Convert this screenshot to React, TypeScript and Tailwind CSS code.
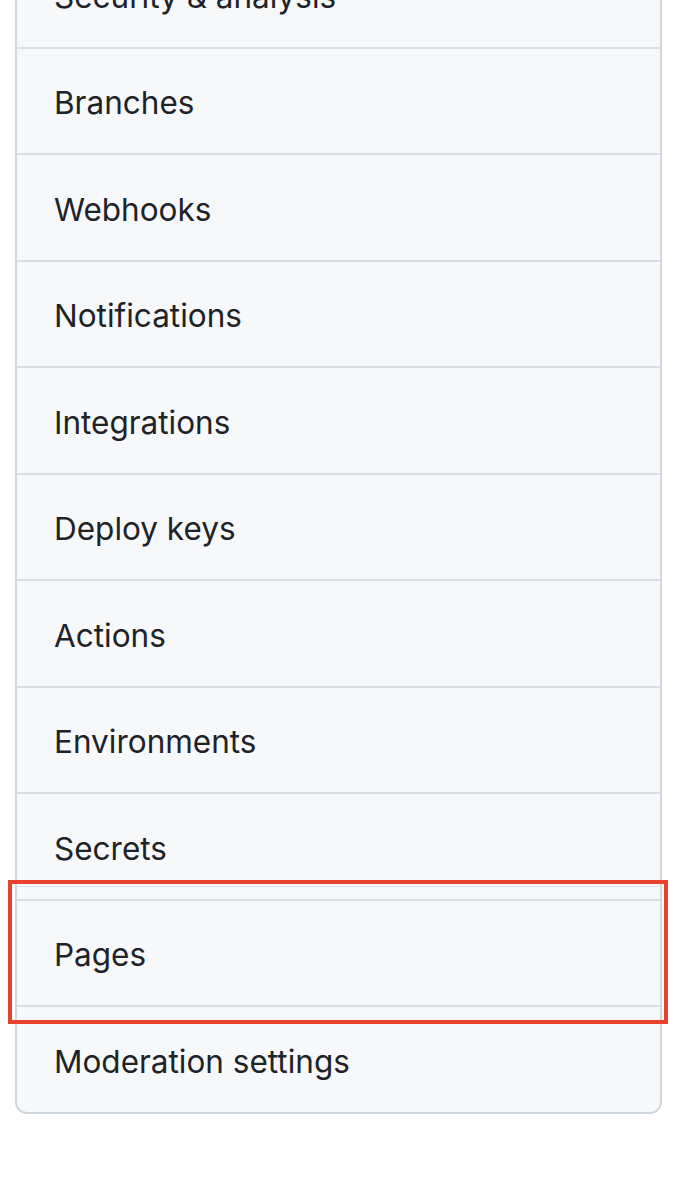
const items = [
  'Security & analysis',
  'Branches',
  'Webhooks',
  'Notifications',
  'Integrations',
  'Deploy keys',
  'Actions',
  'Environments',
  'Secrets',
  'Pages',
  'Moderation settings',
]

export default function App() {
  return (
    <div className="relative h-[1180px] w-[700px] overflow-hidden bg-white" style={{ fontFamily: 'Inter, "Liberation Sans", sans-serif' }}>
      <div className="ml-[15px] mt-[-60px] w-[647px] rounded-[12px] border-2 border-[#d0d7de] bg-[#f6f8fa]">
        {items.map((label, i) => (
          <div
            key={label}
            className={
              i < items.length - 1
                ? 'flex h-[106.5px] items-center border-b-2 border-[#d8dee4] pl-[37px] pt-[4px] text-[31.5px] text-[#1f2328]'
                : 'flex h-[105px] items-center pl-[37px] pt-[4px] text-[31.5px] text-[#1f2328]'
            }
          >
            {label}
          </div>
        ))}
      </div>

      {/* highlight around Pages */}
      <div className="absolute left-[8px] top-[880px] h-[144px] w-[660px] border-4 border-[#e8412c]">
        <div className="mx-[3px] mt-[2px] h-px bg-[#dde2e7]" />
      </div>
    </div>
  )
}
